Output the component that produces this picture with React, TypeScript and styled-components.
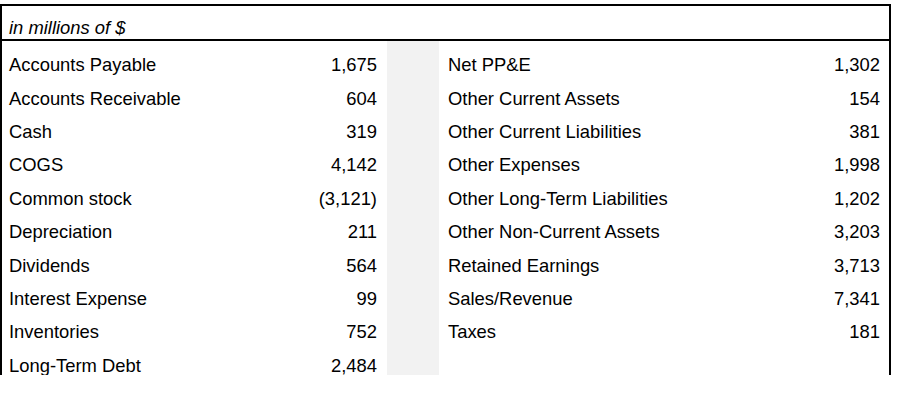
import React from "react";
import styled, { createGlobalStyle } from "styled-components";

const Global = createGlobalStyle`
  html, body { margin: 0; padding: 0; background: #ffffff; }
  body { font-family: "Liberation Sans", Arial, sans-serif; color: #000; }
`;

const Frame = styled.div`
  box-sizing: border-box;
  width: 891px;
  margin-top: 4px;
  border-top: 2px solid #000;
  border-left: 2px solid #000;
  border-right: 2px solid #000;
`;

const Header = styled.div`
  box-sizing: border-box;
  height: 35px;
  padding: 12.4px 0 0 7px;
  border-bottom: 2px solid #000;
  font-size: 18.4px;
  line-height: 20px;
  font-style: italic;
`;

const Body = styled.div`
  display: flex;
  align-items: stretch;
`;

const Column = styled.div<{ $w?: number }>`
  ${(p) => (p.$w ? `width: ${p.$w}px; flex: none;` : `flex: 1;`)}
  display: flex;
  flex-direction: column;
`;

const Spacer = styled.div`
  width: 52px;
  flex: none;
  background: #f2f2f2;
`;

const Row = styled.div<{ $padL: number; $padR: number }>`
  box-sizing: border-box;
  height: 33.4px;
  padding: 14.2px ${(p) => p.$padR}px 0 ${(p) => p.$padL}px;
  display: flex;
  justify-content: space-between;
  font-size: 18.4px;
  line-height: 20px;
  white-space: nowrap;
`;

const Label = styled.span``;
const Value = styled.span`
  text-align: right;
`;

const left: [string, string][] = [
  ["Accounts Payable", "1,675"],
  ["Accounts Receivable", "604"],
  ["Cash", "319"],
  ["COGS", "4,142"],
  ["Common stock", "(3,121)"],
  ["Depreciation", "211"],
  ["Dividends", "564"],
  ["Interest Expense", "99"],
  ["Inventories", "752"],
  ["Long-Term Debt", "2,484"],
];

const right: [string, string][] = [
  ["Net PP&E", "1,302"],
  ["Other Current Assets", "154"],
  ["Other Current Liabilities", "381"],
  ["Other Expenses", "1,998"],
  ["Other Long-Term Liabilities", "1,202"],
  ["Other Non-Current Assets", "3,203"],
  ["Retained Earnings", "3,713"],
  ["Sales/Revenue", "7,341"],
  ["Taxes", "181"],
];

export default function App() {
  return (
    <>
      <Global />
      <Frame>
        <Header>in millions of $</Header>
        <Body>
          <Column $w={385}>
            {left.map(([l, v]) => (
              <Row key={l} $padL={7} $padR={10}>
                <Label>{l}</Label>
                <Value>{v}</Value>
              </Row>
            ))}
          </Column>
          <Spacer />
          <Column>
            {right.map(([l, v]) => (
              <Row key={l} $padL={9} $padR={9}>
                <Label>{l}</Label>
                <Value>{v}</Value>
              </Row>
            ))}
          </Column>
        </Body>
      </Frame>
    </>
  );
}
